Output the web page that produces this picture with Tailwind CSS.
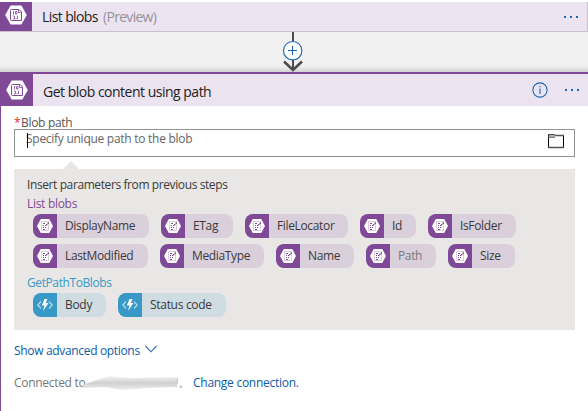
<!DOCTYPE html>
<html lang="en">
<head>
<meta charset="utf-8">
<title>Logic app designer</title>
<script src="https://cdn.jsdelivr.net/npm/@tailwindcss/browser@4"></script>
</head>
<body class="w-[588px] h-[411px] overflow-hidden bg-white font-['Open_Sans','Noto_Sans',sans-serif] text-[12px] leading-4 text-[#3a3a3a] whitespace-nowrap">
<svg class="hidden">
  <symbol id="blob" viewBox="0 0 22 20">
    <path d="M5.6 0.5h10.8L21.8 10l-5.4 9.5H5.6L.2 10z" fill="#fff"/>
    <path d="M6.500 4.500h7.500l2.500 2.500v8.500h-10c-.6 0-1-.4-1-1v-9c0-.6.4-1 1-1z" fill="#fff" stroke="#804998" stroke-width="1"/>
    <path d="M13.500 4.500v3h3M8.500 6v3.500M10.500 6.500h1.500v2.500h-1.500zM8 11h1.500v3H8M12.500 10.500V14M10.500 13.500h1" fill="none" stroke="#804998" stroke-width=".8"/>
  </symbol>
  <symbol id="tag" viewBox="0 0 16 14">
    <path d="M3.800 0h8.400L16 7l-3.800 7H3.800L0 7z" fill="#fff"/>
    <path d="M4.500 2.500h7v9h-7z" fill="none" stroke="#804998" stroke-opacity=".4" stroke-width=".7"/>
    <path d="M6 4h2v1H6zM6 6h1v1H6zM8 6h1.500v1H8zM9 5h1.500v1H9zM10.500 3.500H12V5h-1.500zM6 8h1v1H6zM6 10h2v1H6zM8 8h1v1H8z" fill="#804998"/>
  </symbol>
  <symbol id="fn" viewBox="0 0 16 12">
    <path d="M4 2.500L.8 6 4 9.500M12 2.500L15.200 6 12 9.500" fill="none" stroke="#b8dcec" stroke-width="1.200"/>
    <path d="M7.500 0h3L8.800 4h2.700L6 12l1.500-5.500H4.800z" fill="#fff"/>
  </symbol>
</svg>

<main class="flex flex-col h-full">
  <header class="mt-[2px] h-[30px] shrink-0 flex items-center bg-[#ece3f0] border-b border-r border-[#c8c1cb] text-[14px] text-[#222]">
    <div class="w-8 h-full bg-[#804998] pl-[5px] pt-[3px]"><svg class="w-[22px] h-5"><use href="#blob"/></svg></div>
    <span class="ml-[10px] w-[61px] tracking-[-0.6px]">List blobs</span>
    <span class="text-[#98929b] tracking-[-0.7px]">(Preview)</span>
    <svg class="ml-auto mr-[9px] w-[14px] h-2" fill="#1767b4"><path d="M0 3h2v2H0zM6 3h2v2H6zM12 3h2v2h-2z"/></svg>
  </header>

  <div class="h-10 shrink-0 bg-gradient-to-b from-[#f1f1f1] from-85% to-[#d2d2d2] flex justify-center">
    <svg class="w-[22px] h-10 -ml-[2px]" viewBox="0 0 22 40" fill="none">
      <path d="M11 0v37" stroke="#4c4c4c" stroke-width="2"/>
      <path d="M2 29.500l9 8.500 9-8.500" stroke="#4c4c4c" stroke-width="2.600"/>
      <circle cx="10.700" cy="18.700" r="9.200" fill="#fff" stroke="#2e72b5" stroke-width="1.200"/>
      <path d="M6 18.500h9M10.500 14v9" stroke="#1463ac" stroke-width="1.100"/>
    </svg>
  </div>

  <section class="flex-1 flex flex-col border-t-2 border-l border-[#804998]">
    <header class="h-8 shrink-0 flex items-center bg-[#ece3f0] text-[14px] text-[#222]">
      <div class="w-8 h-full bg-[#804998] pl-[5px] pt-[6px]"><svg class="w-[22px] h-5"><use href="#blob"/></svg></div>
      <span class="ml-[10px] mt-[3px] tracking-[-0.5px]">Get blob content using path</span>
      <svg class="ml-auto w-4 h-4" viewBox="0 0 16 16" fill="none" stroke="#1767b4"><circle cx="8" cy="8" r="7.100" stroke-width="1.100"/><path d="M8 6.500V12M8 4v1.300" stroke-width="1.100"/></svg>
      <svg class="ml-[17px] mr-[9px] w-[14px] h-2" fill="#1767b4"><path d="M0 3h2v2H0zM6 3h2v2H6zM12 3h2v2h-2z"/></svg>
    </header>

    <div class="pl-[13px] pr-[13px] flex flex-col">
      <label class="mt-[10px] h-[13px] flex items-center text-[#555]"><span class="w-[7px] text-[#e3262f]">*</span><span class="tracking-[-0.3px]">Blob path</span></label>
      <div class="h-7 border border-[#939393] flex pl-[11px] pr-[10px]">
        <span class="relative mt-[1px] text-[#666] tracking-[-0.27px]">Specify unique path to the blob<i class="absolute left-[1px] top-[2px] w-px h-[15px] bg-black"></i></span>
        <svg class="ml-auto mt-[4px] w-4 h-[15px]" viewBox="0 0 16 15" fill="none"><path d="M.5 1v13M15.500 2v12" stroke="#000"/><path d="M0 13.500h16M7 1.500h9M0 .5h7M0 3h7" stroke="#555" stroke-width="1.300"/><path d="M1 1h6v2H1z" fill="#aaa"/></svg>
      </div>
      <svg class="ml-[49px] mt-[4px] w-4 h-2" viewBox="0 0 16 8"><path d="M0 8L8 0l8 8z" fill="#e8e7e5"/></svg>

      <div class="h-[161px] bg-[#e8e7e5] pl-[13px] pt-[8px]">
        <div class="tracking-[-0.4px]">Insert parameters from previous steps</div>
        <div class="mt-[3px] text-[#804998] tracking-[-0.3px]">List blobs</div>
        <div class="mt-[2px] ml-[6px] flex flex-col gap-[6px] tracking-[-0.35px]">
          <div class="flex gap-3">
            <div class="w-[116px] h-6 rounded-lg overflow-hidden bg-[#dad0dc] flex items-center"><div class="w-6 h-6 bg-[#804998] flex items-center justify-center"><svg class="w-4 h-[14px]"><use href="#tag"/></svg></div><span class="ml-2">DisplayName</span></div>
            <div class="w-[72px] h-6 rounded-lg overflow-hidden bg-[#dad0dc] flex items-center"><div class="w-6 h-6 bg-[#804998] flex items-center justify-center"><svg class="w-4 h-[14px]"><use href="#tag"/></svg></div><span class="ml-2">ETag</span></div>
            <div class="w-[103px] h-6 rounded-lg overflow-hidden bg-[#dad0dc] flex items-center"><div class="w-6 h-6 bg-[#804998] flex items-center justify-center"><svg class="w-4 h-[14px]"><use href="#tag"/></svg></div><span class="ml-2">FileLocator</span></div>
            <div class="w-[56px] h-6 rounded-lg overflow-hidden bg-[#dad0dc] flex items-center"><div class="w-6 h-6 bg-[#804998] flex items-center justify-center"><svg class="w-4 h-[14px]"><use href="#tag"/></svg></div><span class="ml-2">Id</span></div>
            <div class="w-[88px] h-6 rounded-lg overflow-hidden bg-[#dad0dc] flex items-center"><div class="w-6 h-6 bg-[#804998] flex items-center justify-center"><svg class="w-4 h-[14px]"><use href="#tag"/></svg></div><span class="ml-2">IsFolder</span></div>
          </div>
          <div class="flex gap-3">
            <div class="w-[115px] h-6 rounded-lg overflow-hidden bg-[#dad0dc] flex items-center"><div class="w-6 h-6 bg-[#804998] flex items-center justify-center"><svg class="w-4 h-[14px]"><use href="#tag"/></svg></div><span class="ml-2">LastModified</span></div>
            <div class="w-[104px] h-6 rounded-lg overflow-hidden bg-[#dad0dc] flex items-center"><div class="w-6 h-6 bg-[#804998] flex items-center justify-center"><svg class="w-4 h-[14px]"><use href="#tag"/></svg></div><span class="ml-2">MediaType</span></div>
            <div class="w-[78px] h-6 rounded-lg overflow-hidden bg-[#dad0dc] flex items-center"><div class="w-6 h-6 bg-[#804998] flex items-center justify-center"><svg class="w-4 h-[14px]"><use href="#tag"/></svg></div><span class="ml-2">Name</span></div>
            <div class="w-[70px] h-6 rounded-lg overflow-hidden bg-[#dad0dc] flex items-center"><div class="w-6 h-6 bg-[#804998] flex items-center justify-center"><svg class="w-4 h-[14px]"><use href="#tag"/></svg></div><span class="ml-2 text-[#777]">Path</span></div>
            <div class="w-[67px] h-6 rounded-lg overflow-hidden bg-[#dad0dc] flex items-center"><div class="w-6 h-6 bg-[#804998] flex items-center justify-center"><svg class="w-4 h-[14px]"><use href="#tag"/></svg></div><span class="ml-2">Size</span></div>
          </div>
        </div>
        <div class="mt-[7px] text-[#3899c6] tracking-[-0.4px]">GetPathToBlobs</div>
        <div class="mt-[2px] ml-[6px] flex gap-3 tracking-[-0.3px]">
          <div class="w-[73px] h-6 rounded-lg overflow-hidden bg-[#cfdce2] flex items-center"><div class="w-6 h-6 bg-[#3899c6] flex items-center justify-center"><svg class="w-4 h-3"><use href="#fn"/></svg></div><span class="ml-2">Body</span></div>
          <div class="w-[108px] h-6 rounded-lg overflow-hidden bg-[#cfdce2] flex items-center"><div class="w-6 h-6 bg-[#3899c6] flex items-center justify-center"><svg class="w-4 h-3"><use href="#fn"/></svg></div><span class="ml-2">Status code</span></div>
        </div>
      </div>

      <div class="mt-[13px] h-4 flex text-[#0a5ca8]">
        <span class="w-[131px] tracking-[-0.33px]">Show advanced options</span>
        <svg class="mt-[2px] w-3 h-2" viewBox="0 0 12 8" fill="none" stroke="#2e72b5" stroke-width="1.100"><path d="M.5 1L6 6.800 11.500 1"/></svg>
      </div>
      <div class="mt-4 h-4 flex">
        <span class="relative w-[179px] text-[#777] tracking-[-0.3px]">Connected to
          <svg class="absolute left-[65px] top-[-2px] w-[106px] h-[20px]" viewBox="0 0 106 20"><defs><filter id="soft"><feGaussianBlur stdDeviation=".7"/></filter><linearGradient id="smear" x1="0" y1="0" x2="0" y2="1"><stop stop-color="#f4f4f4"/><stop offset=".5" stop-color="#d0d0d0"/><stop offset="1" stop-color="#ededed"/></linearGradient></defs><path d="M7 3h20v14H7z" fill="#fff" filter="url(#soft)"/><path d="M3 12L18 7 30 3l20 2 49-1-1 10-30 1-24 2-18-3-22 1z" fill="url(#smear)" filter="url(#soft)"/><path d="M99 5l-1 6M101 13h1.500v1.500H101z" stroke="#bbb" stroke-width=".7" fill="#aaa"/></svg>
        </span>
        <span class="text-[#0a5ca8] tracking-[-0.27px]">Change connection.</span>
      </div>
    </div>
  </section>
</main>
</body>
</html>
